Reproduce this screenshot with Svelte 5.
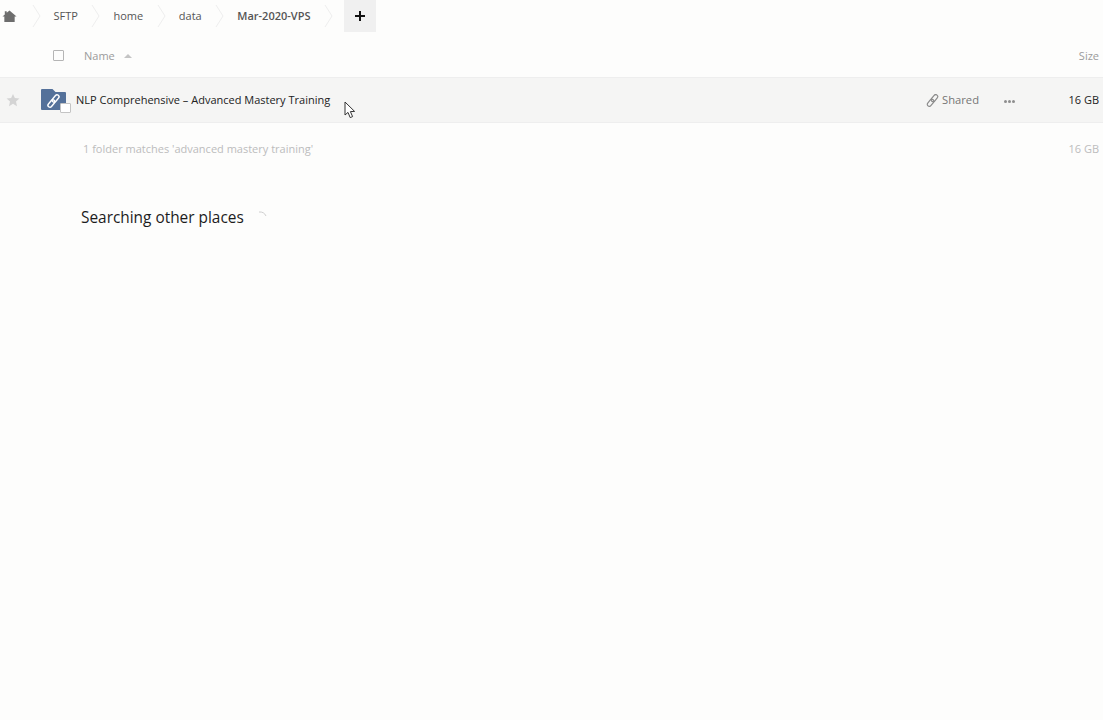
<script>
	const crumbs = [`SFTP`, `home`, `data`, `Mar-2020-VPS`]
</script>

<div class="page">
	<nav class="breadcrumb">
		<svg class="home" width="15" height="14" viewBox="0 0 16 14">
			<path d="M8 1 L15.5 7.5 L13.5 7.5 L13.5 13.5 L2.5 13.5 L2.5 7.5 L0.5 7.5 L3 5.4 L3 2 L5 2 L5 3.6 Z" fill="#6d6d6d" />
		</svg>
		<svg class="chevron" width="14" height="32" viewBox="0 0 14 32">
			<path d="M3 5 L10 16 L3 27" fill="none" stroke="#eeeeee" />
		</svg>
		{#each crumbs as crumb, i}
			<span class="crumb" class:last={i === crumbs.length - 1}>{crumb}</span>
			<svg class="chevron" width="14" height="32" viewBox="0 0 14 32">
				<path d="M3 5 L10 16 L3 27" fill="none" stroke="#eeeeee" />
			</svg>
		{/each}
		<button class="new">
			<svg width="12" height="12" viewBox="0 0 12 12">
				<path d="M6 1 V11 M1 6 H11" stroke="#111" stroke-width="2" />
			</svg>
		</button>
	</nav>

	<div class="head row">
		<span class="check"></span>
		<span class="name-head">Name</span>
		<span class="sort"></span>
		<span class="size-head">Size</span>
	</div>

	<div class="file row">
		<svg class="star" width="14" height="14" viewBox="0 0 24 24">
			<path d="M12 1.5 L15.2 8.6 L23 9.5 L17.2 14.7 L18.8 22.5 L12 18.6 L5.2 22.5 L6.8 14.7 L1 9.5 L8.8 8.6 Z" fill="#d4d4d4" />
		</svg>
		<span class="folder">
			<svg width="25" height="21" viewBox="0 0 25 21">
				<path d="M0 1 Q0 0 1 0 L11.5 0 L14.5 3 L24 3 Q25 3 25 4 L25 20 Q25 21 24 21 L1 21 Q0 21 0 20 Z" fill="#54719a" />
				<g fill="none" stroke="#fff" stroke-width="1.4" transform="rotate(-50 12.5 12)">
					<rect x="5" y="10" width="8.5" height="4" rx="2" />
					<rect x="11.5" y="10" width="8.5" height="4" rx="2" />
				</g>
			</svg>
			<span class="folder-check"></span>
		</span>
		<span class="file-name">NLP Comprehensive – Advanced Mastery Training</span>
		<span class="shared">
			<svg width="13" height="13" viewBox="0 0 13 13">
				<g fill="none" stroke="#8a8a8a" stroke-width="1.2" transform="rotate(-50 6.5 6.5)">
					<rect x="-0.5" y="4.5" width="8" height="4" rx="2" />
					<rect x="5.5" y="4.5" width="8" height="4" rx="2" />
				</g>
			</svg>
			<span class="shared-label">Shared</span>
		</span>
		<span class="dots"><i></i><i></i><i></i></span>
		<span class="size">16 GB</span>
	</div>

	<div class="summary row">
		<span>1 folder matches 'advanced mastery training'</span>
		<span class="summary-size">16 GB</span>
	</div>

	<div class="other">
		<h2>Searching other places</h2>
		<svg class="spinner" width="10" height="10" viewBox="0 0 10 10">
			<path d="M2 1 Q7 0.5 9 5" fill="none" stroke="#cfcfcf" />
		</svg>
	</div>

	<svg class="cursor" width="12" height="18" viewBox="0 0 12 18">
		<path d="M1 1 L1 14 L4 11.4 L6.2 16.6 L8.6 15.6 L6.4 10.6 L10.6 10.4 Z" fill="#fff" stroke="#333" stroke-linejoin="round" />
	</svg>
</div>

<style>
	:global(body) {
		margin: 0;
		background: #fdfdfc;
	}

	.page {
		position: relative;
		height: 720px;
		overflow: hidden;
		font-family: "Open Sans", sans-serif;
		font-size: 11px;
		color: #222;
	}

	.breadcrumb {
		display: flex;
		align-items: center;
		height: 32px;
		padding-left: 2px;
		color: #555;
	}

	.home {
		margin: 0 12.5px 1px 0;
	}

	.chevron {
		flex: none;
	}

	.crumb {
		margin: -2px 11.6px 0 10px;
	}

	.crumb.last {
		font-weight: 600;
	}

	.new {
		display: flex;
		align-items: center;
		justify-content: center;
		width: 32px;
		height: 32px;
		margin-left: 7.6px;
		padding: 0;
		border: 0;
		background: #f0f0f0;
	}

	.row {
		display: flex;
		align-items: center;
	}

	.head {
		height: 45px;
		border-bottom: 1px solid #eee;
		color: #9b9b9b;
		box-sizing: border-box;
		margin-top: 1px;
	}

	.check {
		width: 9px;
		height: 9px;
		margin: 1px 0 0 53px;
		border: 1px solid #b5b5b5;
		border-radius: 1px;
	}

	.name-head {
		margin-left: 20px;
	}

	.sort {
		margin: 2px 0 0 9px;
		border: 4px solid transparent;
		border-top: 0;
		border-bottom-color: #c4c4c4;
	}

	.size-head {
		margin-left: auto;
		padding-right: 4px;
	}

	.file {
		height: 45px;
		box-sizing: border-box;
		border-bottom: 1px solid #eee;
		background: #f5f5f4;
	}

	.star {
		margin-left: 6px;
	}

	.folder {
		position: relative;
		display: block;
		width: 25px;
		height: 21px;
		margin-left: 21px;
		margin-top: -2px;
	}

	.folder svg {
		display: block;
	}

	.folder-check {
		position: absolute;
		right: -5px;
		bottom: -3px;
		width: 9px;
		height: 8px;
		background: #fff;
		border: 1px solid #c4c4c4;
		border-radius: 1px;
	}

	.file-name {
		margin: -2px 0 0 10px;
		color: #222;
	}

	.shared {
		display: flex;
		align-items: center;
		gap: 3px;
		margin-left: auto;
		color: #757575;
	}

	.shared-label {
		margin-top: -2px;
		font-size: 11.2px;
	}

	.dots {
		display: flex;
		gap: 1px;
		margin-left: 25px;
		margin-top: 2px;
	}

	.dots i {
		width: 3px;
		height: 3px;
		border-radius: 50%;
		background: #8e8e8e;
	}

	.size {
		width: 40px;
		margin: -2px 0 0 44px;
		padding-right: 4px;
		text-align: right;
	}

	.summary {
		justify-content: space-between;
		height: 50px;
		padding: 0 4px 0 83px;
		color: #bcbcbc;
	}

	.other {
		display: flex;
		align-items: center;
		gap: 13px;
		margin: 32px 0 0 81px;
	}

	h2 {
		margin: 0;
		font-size: 15.4px;
		font-weight: 400;
		line-height: 26px;
		color: #1c1c1c;
	}

	.spinner {
		margin-top: -4px;
		margin-left: 0;
	}

	.cursor {
		position: absolute;
		left: 344px;
		top: 101px;
	}
</style>
